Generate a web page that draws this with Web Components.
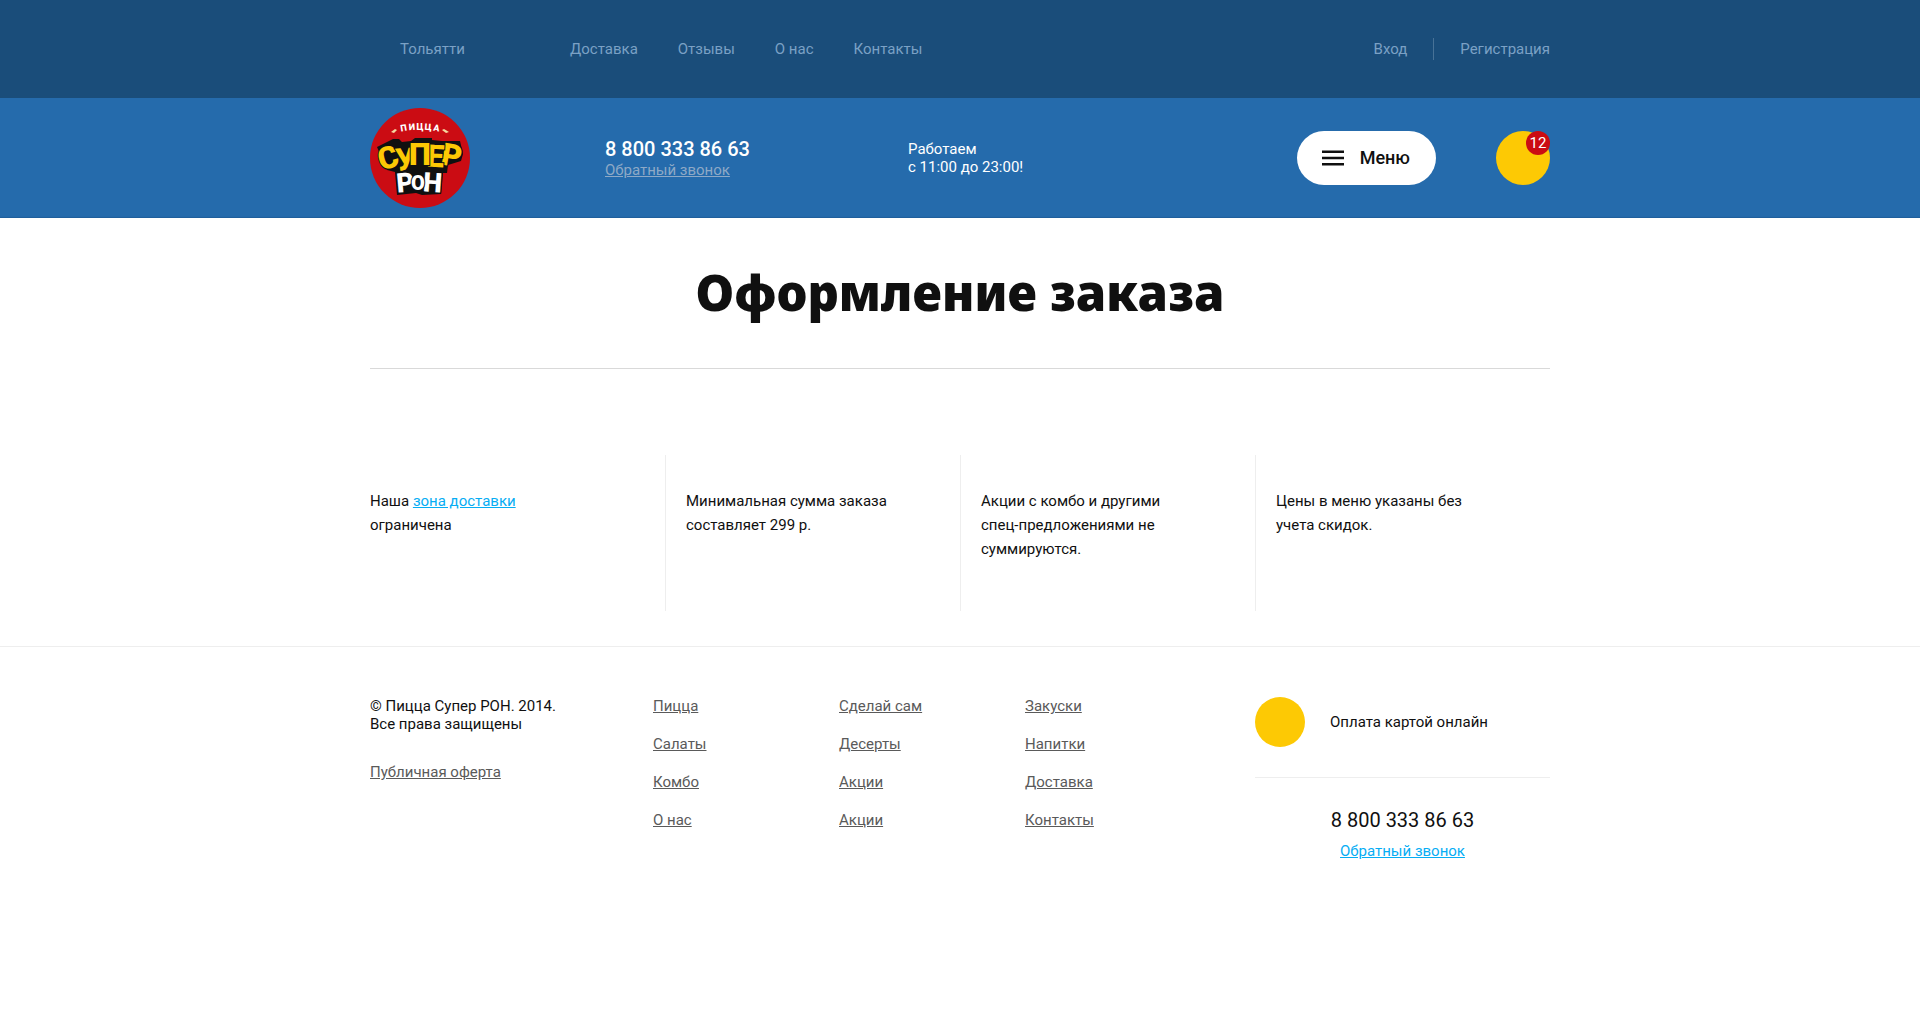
<!DOCTYPE html>
<html lang="ru">
<head>
<meta charset="utf-8">
<meta name="viewport" content="width=device-width, initial-scale=1">
<title>Оформление заказа</title>
<style>
  body {
    margin: 0;
    background: #fff;
    color: #101010;
    font: 15px/18px Roboto, "Liberation Sans", sans-serif;
    --page: 1180px;
    --navy: #1a4d7a;
    --blue: #256bac;
    --yellow: #fdc904;
    --red: #cb0c13;
    --sky: #06adf4;
    --grey: #5a5a5a;
    --line: #eeeeee;
  }
</style>
</head>
<body>
<pizza-page></pizza-page>

<script>
const define = (name, html) => {
  const template = document.createElement('template');
  template.innerHTML = html;
  customElements.define(name, class extends HTMLElement {
    constructor() {
      super();
      this.attachShadow({ mode: 'open' }).append(template.content.cloneNode(true));
    }
  });
};

define('page-container', `
  <style>
    :host { display: block; box-sizing: border-box; width: 100%; max-width: var(--page); margin: 0 auto; }
  </style>
  <slot></slot>`);

define('top-bar', `
  <style>
    :host { display: block; background: var(--navy); color: #7ba1c5; }
    .row { display: flex; align-items: center; min-height: 98px; }
    a { color: inherit; text-decoration: none; }
    .city { width: 170px; margin-left: 30px; }
    nav { display: flex; gap: 40px; }
    .account { display: flex; align-items: center; margin-left: auto; }
    .account a + a { margin-left: 26px; padding: 2px 0 2px 26px; border-left: 1px solid #487297; }
  </style>
  <page-container><div class="row">
    <div class="city"><a href="#">Тольятти</a></div>
    <nav>
      <a href="#">Доставка</a>
      <a href="#">Отзывы</a>
      <a href="#">О нас</a>
      <a href="#">Контакты</a>
    </nav>
    <div class="account"><a href="#">Вход</a><a href="#">Регистрация</a></div>
  </div></page-container>`);

define('pizza-logo', `
  <style>
    :host { display: block; width: 100px; height: 100px; }
    svg { display: block; width: 100%; height: 100%; }
    text { font-family: Roboto, "Liberation Sans", sans-serif; font-weight: 900; text-anchor: middle; }
    .big text { stroke: #101010; stroke-width: 2; paint-order: stroke; }
  </style>
  <svg viewBox="0 0 100 100" role="img" aria-label="Пицца Супер РОН">
    <circle cx="50" cy="50" r="50" fill="#cb0c13"/>
    <g fill="#f6d9a0">
      <path d="M21 24l4-3 2 1-3 3z"/><path d="M79 24l-5-3-2 1 4 3z"/>
    </g>
    <g fill="#fff" font-size="9">
      <text transform="translate(34 23) rotate(-10)">П</text>
      <text transform="translate(42 22) rotate(-4)">И</text>
      <text transform="translate(50 22)">Ц</text>
      <text transform="translate(58 22) rotate(4)">Ц</text>
      <text transform="translate(66 23) rotate(10)">А</text>
    </g>
    <path fill="#101010" d="M7 39L23 31H29L32 34L41 33L45 30H62V32L72 33H90L93 46L91 53L78 57L77 65H73L71 86L52 87L46 85L27 87L25 64L17 62Z"/>
    <g class="big" fill="#fdc904">
      <text font-size="31" transform="translate(21 60) rotate(-16)">С</text>
      <text font-size="31" transform="translate(80 58) rotate(10)">Р</text>
      <text font-size="31" transform="translate(65 59) rotate(3)">Е</text>
      <text font-size="31" transform="translate(36 62) rotate(-4)">У</text>
      <text font-size="31" transform="translate(50 57)">П</text>
    </g>
    <g class="big" fill="#fff">
      <text font-size="27" transform="translate(36 84) rotate(-5)">Р</text>
      <text font-size="27" transform="translate(62 84) rotate(4)">Н</text>
      <text font-size="20" transform="translate(48 82)">О</text>
    </g>
  </svg>`);

define('menu-button', `
  <style>
    :host { display: block; }
    button {
      display: flex; align-items: center; gap: 16px; height: 54px; padding: 0 26px 0 25px;
      border: 0; border-radius: 27px; background: #fff; color: #101010;
      font: 500 18px/22px Roboto, "Liberation Sans", sans-serif; cursor: pointer;
    }
    svg { display: block; width: 22px; height: 16px; }
  </style>
  <button type="button">
    <svg viewBox="0 0 22 16" aria-hidden="true" fill="#101010">
      <path d="M0 .6h22v2.5H0zM0 6.8h22v2.5H0zM0 13h22v2.5H0z"/>
    </svg>
    <slot></slot>
  </button>`);

define('cart-button', `
  <style>
    :host { display: block; }
    a { position: relative; display: block; width: 54px; height: 54px; border-radius: 50%; background: var(--yellow); text-decoration: none; }
    span {
      position: absolute; top: 0; right: 0; width: 24px; height: 24px; border-radius: 50%;
      background: var(--red); color: #fff; text-align: center; line-height: 24px;
    }
  </style>
  <a href="#" aria-label="Корзина"><span><slot></slot></span></a>`);

define('site-header', `
  <style>
    :host { display: block; background: var(--blue); color: #fff; box-shadow: inset 0 -2px 1px -1px #205f9b; }
    .row { display: flex; align-items: center; min-height: 120px; }
    .phone { width: 303px; margin-left: 135px; }
    .phone b { display: block; font-size: 20px; line-height: 24px; font-weight: 500; }
    .phone a { display: block; color: #8ea9c6; }
    .hours { margin: 0; }
    .tools { display: flex; gap: 60px; margin-left: auto; }
  </style>
  <page-container><div class="row">
    <pizza-logo></pizza-logo>
    <div class="phone"><b>8 800 333 86 63</b><a href="#">Обратный звонок</a></div>
    <p class="hours">Работаем<br>с 11:00 до 23:00!</p>
    <div class="tools">
      <menu-button>Меню</menu-button>
      <cart-button>12</cart-button>
    </div>
  </div></page-container>`);

define('page-title', `
  <style>
    :host { display: block; border-bottom: 1px solid #d9d9d9; }
    h1 {
      margin: 0; padding: 44px 0 46px; text-align: center;
      font: 900 49px/60px "Noto Sans", Roboto, sans-serif;
    }
  </style>
  <h1><slot></slot></h1>`);

define('info-note', `
  <style>
    :host { display: block; box-sizing: border-box; min-height: 156px; padding: 34px 60px 0 20px; border-left: 1px solid var(--line); line-height: 24px; }
    :host(:first-of-type) { padding-left: 0; border-left: 0; }
    ::slotted(a) { color: var(--sky); }
    p { margin: 0; }
  </style>
  <p><slot></slot></p>`);

define('order-notes', `
  <style>
    :host { display: grid; grid-template-columns: repeat(4, 1fr); padding: 86px 0 35px; }
  </style>
  <info-note>Наша <a href="#">зона доставки</a><br>ограничена</info-note>
  <info-note>Минимальная сумма заказа составляет 299 р.</info-note>
  <info-note>Акции с комбо и другими спец-предложениями не суммируются.</info-note>
  <info-note>Цены в меню указаны без учета скидок.</info-note>`);

define('link-column', `
  <style>
    :host { display: flex; flex-direction: column; align-items: flex-start; gap: 20px; width: 186px; }
    ::slotted(a) { color: var(--grey); }
  </style>
  <slot></slot>`);

define('contact-panel', `
  <style>
    :host { display: block; width: 295px; }
    .pay { display: flex; align-items: center; gap: 25px; padding-bottom: 30px; border-bottom: 1px solid var(--line); }
    .coin { width: 50px; height: 50px; border-radius: 50%; background: var(--yellow); }
    .call { display: flex; flex-direction: column; align-items: center; gap: 10px; padding-top: 30px; }
    .call b { font-size: 20px; line-height: 24px; font-weight: 400; }
    .call a { color: var(--sky); }
  </style>
  <div class="pay"><span class="coin"></span><span>Оплата картой онлайн</span></div>
  <div class="call"><b>8 800 333 86 63</b><a href="#">Обратный звонок</a></div>`);

define('site-footer', `
  <style>
    :host { display: block; border-top: 1px solid var(--line); }
    .row { display: flex; padding: 50px 0; }
    .legal { width: 283px; }
    .legal p { margin: 0 0 30px; }
    .legal a { color: var(--grey); }
    contact-panel { margin-left: auto; }
  </style>
  <page-container><div class="row">
    <div class="legal"><p>© Пицца Супер РОН. 2014.<br>Все права защищены</p><a href="#">Публичная оферта</a></div>
    <link-column><a href="#">Пицца</a><a href="#">Салаты</a><a href="#">Комбо</a><a href="#">О нас</a></link-column>
    <link-column><a href="#">Сделай сам</a><a href="#">Десерты</a><a href="#">Акции</a><a href="#">Акции</a></link-column>
    <link-column><a href="#">Закуски</a><a href="#">Напитки</a><a href="#">Доставка</a><a href="#">Контакты</a></link-column>
    <contact-panel></contact-panel>
  </div></page-container>`);

define('pizza-page', `
  <style>:host { display: block; }</style>
  <top-bar></top-bar>
  <site-header></site-header>
  <page-container>
    <page-title>Оформление заказа</page-title>
    <order-notes></order-notes>
  </page-container>
  <site-footer></site-footer>`);
</script>
</body>
</html>
